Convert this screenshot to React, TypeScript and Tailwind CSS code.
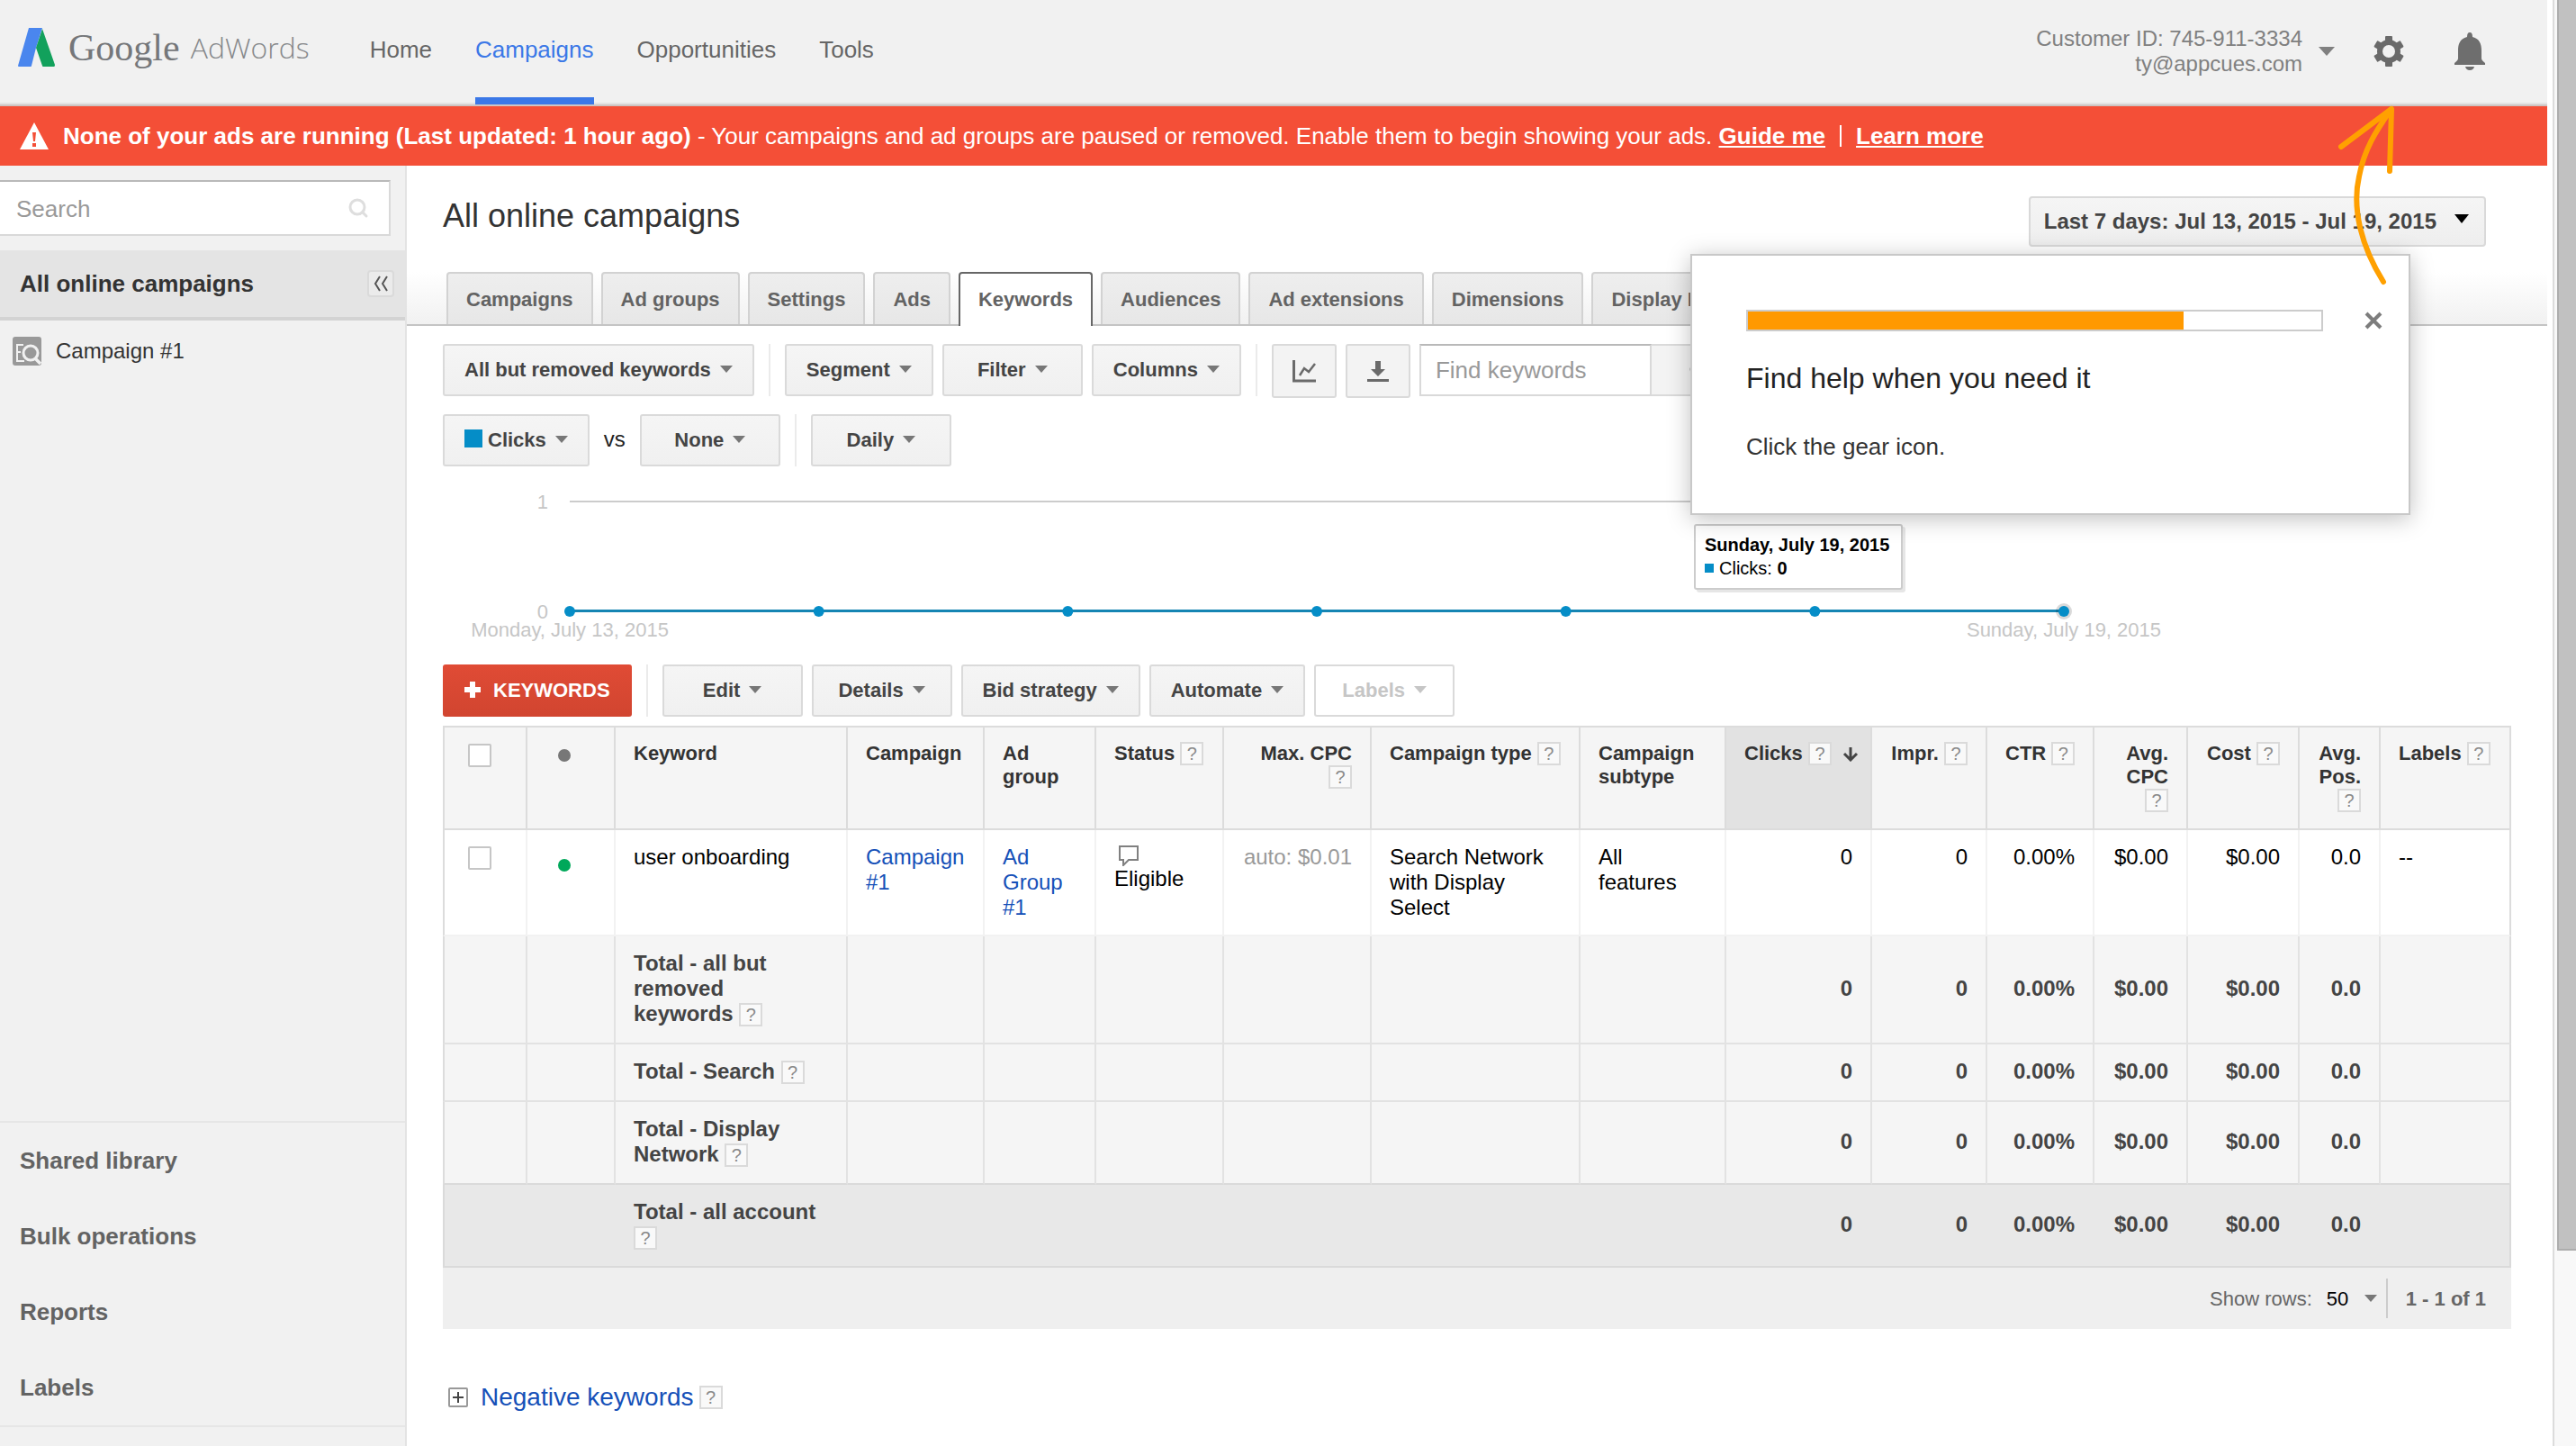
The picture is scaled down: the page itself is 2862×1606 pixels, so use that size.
import type { ReactNode } from "react";
import clsx from "clsx";
import { Search } from "lucide-react";

const NAV_LINKS = ["Home", "Campaigns", "Opportunities", "Tools"];

const TABS = [
  "Campaigns",
  "Ad groups",
  "Settings",
  "Ads",
  "Keywords",
  "Audiences",
  "Ad extensions",
  "Dimensions",
  "Display Network",
];

const SIDEBAR_LINKS = ["Shared library", "Bulk operations", "Reports", "Labels"];

const TOTALS = ["Total - all but removed keywords", "Total - Search", "Total - Display Network"];

const STATS = ["0", "0", "0.00%", "$0.00", "$0.00", "0.0"];

const POINTS = [0, 1, 2, 3, 4, 5, 6];

function Caret({ className }: { className?: string }) {
  return (
    <svg viewBox="0 0 14 8" className={clsx("h-2 w-3.5 shrink-0 fill-current", className)} aria-hidden="true">
      <path d="M0 0h14L7 8z" />
    </svg>
  );
}

function Help() {
  return (
    <button
      type="button"
      aria-label="Help"
      className="inline-block h-[26px] w-[26px] border-2 border-[#dadada] bg-[#f9f9f9] text-center align-bottom text-[20px] leading-[22px] font-normal text-[#8a8a8a]"
    >
      ?
    </button>
  );
}

function MenuButton({ children, disabled }: { children: ReactNode; disabled?: boolean }) {
  return (
    <button
      type="button"
      disabled={disabled}
      className={clsx(
        "flex h-[58px] min-w-[156px] items-center justify-center gap-2.5 rounded-[3px] border-2 border-[#dadada] px-[22px] pb-0.5 text-[22px] font-bold whitespace-nowrap",
        disabled ? "bg-white text-[#c6c6c6]" : "bg-linear-to-b from-[#f5f5f5] to-[#f0f0f0] text-[#444]"
      )}
    >
      {children}
      <Caret className={disabled ? "text-[#c6c6c6]" : "text-[#777]"} />
    </button>
  );
}

function Divider() {
  return <div className="mx-1.5 h-[58px] w-0.5 bg-[#ebebeb]" />;
}

function Header() {
  return (
    <header className="flex h-[118px] shrink-0 items-start border-b-2 border-[#cdc5c3] bg-[#f1f1f1] shadow-[inset_0_-2px_0_#e3e3e3]">
      {/* Logo */}
      <a href="#home" className="flex h-[106px] items-center pl-5" aria-label="Google AdWords">
        <svg viewBox="0 0 42 44" className="mr-3.5 h-11 w-[42px]" aria-hidden="true">
          <path d="M12 0h15l-7 22-5 20q0 1-1 1H1q-1 0-1-1z" fill="#4a86ee" />
          <path d="M27 1 41 41q0 2-1 2H28q-1 0-1-1l-7-20z" fill="#12a15c" />
        </svg>
        <span className="font-['Liberation_Serif',serif] text-[42px] text-[#75777a]">Google</span>
        <span className="ml-3 font-['Open_Sans',sans-serif] text-[32px] font-light text-[#85878a]">AdWords</span>
      </a>

      {/* Main navigation */}
      <nav className="ml-[67px] flex gap-12 text-[26px] text-[#666]">
        {NAV_LINKS.map((link) => (
          <a
            key={link}
            href={`#${link.toLowerCase()}`}
            className={clsx(
              "flex h-[116px] items-start pt-10 leading-[30px]",
              link === "Campaigns" && "border-b-8 border-[#3b78e7] text-[#3b78e7]"
            )}
          >
            {link}
          </a>
        ))}
      </nav>

      {/* Account */}
      <div className="ml-auto flex h-[114px] items-center pr-[68px]">
        <button type="button" className="flex items-center gap-[18px] text-right text-[24px] leading-7 text-[#808080]">
          <span>
            Customer ID: 745-911-3334
            <br />
            ty@appcues.com
          </span>
          <svg viewBox="0 0 18 10" className="h-2.5 w-[18px] fill-current" aria-hidden="true">
            <path d="M0 0h18L9 10z" />
          </svg>
        </button>
        <button type="button" aria-label="Settings" className="ml-[43px]">
          <svg viewBox="0 0 34 34" className="h-[34px] w-[34px] fill-[#6a6a6a]" aria-hidden="true">
            <rect x="13" y="0" width="8" height="8" rx="1" />
            <rect x="13" y="0" width="8" height="8" rx="1" transform="rotate(60 17 17)" />
            <rect x="13" y="0" width="8" height="8" rx="1" transform="rotate(120 17 17)" />
            <rect x="13" y="0" width="8" height="8" rx="1" transform="rotate(180 17 17)" />
            <rect x="13" y="0" width="8" height="8" rx="1" transform="rotate(240 17 17)" />
            <rect x="13" y="0" width="8" height="8" rx="1" transform="rotate(300 17 17)" />
            <circle cx="17" cy="17" r="10" fill="none" stroke="#6a6a6a" strokeWidth="6" />
          </svg>
        </button>
        <button type="button" aria-label="Notifications" className="ml-[55px]">
          <svg viewBox="0 0 36 42" className="h-[42px] w-9 fill-[#6e6e6e]" aria-hidden="true">
            <path d="M18 0q3 0 3 5c8 2 10 8 10 15v9q0 2 4 5v2H1v-2q4-3 4-5v-9C5 13 7 7 15 5q0-5 3-5z" />
            <path d="M13 38h10q-1 4-5 4t-5-4z" />
          </svg>
        </button>
      </div>
    </header>
  );
}

function AlertBanner() {
  return (
    <div className="flex h-[66px] shrink-0 items-center bg-[#f44f37] px-[21px] text-[26px] text-white">
      <svg viewBox="0 0 34 32" className="mr-[15px] h-8 w-[34px]" aria-hidden="true">
        <path d="M17 1 33 31H1z" fill="#fff" />
        <path d="M15 12h4l-1 10h-2zM15 24h4v4h-4z" fill="#f44f37" />
      </svg>
      <p>
        <b>None of your ads are running (Last updated: 1 hour ago)</b> - Your campaigns and ad groups are paused or
        removed. Enable them to begin showing your ads.{" "}
        <a href="#guide" className="font-bold underline">
          Guide me
        </a>
      </p>
      <div className="mx-4 h-6 w-0.5 bg-white" />
      <a href="#learn" className="font-bold underline">
        Learn more
      </a>
    </div>
  );
}

function Sidebar() {
  return (
    <aside className="flex w-[452px] shrink-0 flex-col border-r-2 border-[#e3e3e3] bg-[#f1f1f1]">
      <div className="mt-4 mr-4 mb-4 flex h-[62px] items-center border-2 border-l-0 border-[#d9d9d9] border-t-[#b9b9b9] bg-white pr-[22px]">
        <input
          type="text"
          aria-label="Search campaigns"
          placeholder="Search"
          className="min-w-0 flex-1 pt-0.5 pl-[18px] text-[26px] outline-none placeholder:text-[#999]"
        />
        <Search size={24} strokeWidth={3} className="text-[#dedede]" />
      </div>

      <div className="flex h-[78px] items-center border-b-4 border-[#d3d3d3] bg-[#e4e4e4] pr-3 pl-[22px]">
        <a href="#all" className="text-[26px] font-bold text-[#333]">
          All online campaigns
        </a>
        <button
          type="button"
          aria-label="Collapse"
          className="ml-auto flex h-[30px] w-[30px] items-center justify-center rounded-sm border-2 border-[#dadada] bg-[#ebebeb]"
        >
          <svg viewBox="0 0 18 18" className="h-[18px] w-[18px] fill-none stroke-[#555] stroke-2" aria-hidden="true">
            <path d="M8 1 3 9l5 8M16 1l-5 8 5 8" />
          </svg>
        </button>
      </div>

      <a href="#campaign-1" className="mt-4 flex items-center gap-4 pl-3.5 text-[24px] text-[#333]">
        <svg viewBox="0 0 32 32" className="h-8 w-8" aria-hidden="true">
          <rect width="32" height="32" rx="3" fill="#999" />
          <path d="M4 9h8M4 17h5M4 27h9M5 8v19" fill="none" stroke="#f1f1f1" strokeWidth="2" />
          <circle cx="20" cy="18" r="8" fill="#999" stroke="#f1f1f1" strokeWidth="3" />
          <path d="m25 24 6 6" stroke="#f1f1f1" strokeWidth="3.5" />
        </svg>
        Campaign #1
      </a>

      <nav className="mt-auto mb-[21px] border-y-2 border-[#e6e6e6]">
        {SIDEBAR_LINKS.map((link) => (
          <a
            key={link}
            href={`#${link}`}
            className="flex h-[84px] items-center pl-[22px] text-[26px] font-bold text-[#636363]"
          >
            {link}
          </a>
        ))}
      </nav>
    </aside>
  );
}

function Tabs() {
  return (
    <div className="mt-7 flex h-[60px] gap-[9px] border-b-2 border-[#c4c4c4] bg-linear-to-b from-white to-[#f1f1f1] px-11">
      {TABS.map((tab) => (
        <button
          key={tab}
          type="button"
          className={clsx(
            "rounded-t border-2 border-b-0 px-5 text-[22px] font-bold whitespace-nowrap text-[#636363]",
            tab === "Keywords"
              ? "-mb-0.5 border-[#666] bg-white pb-0.5"
              : "border-[#d2d2d2] bg-linear-to-b from-[#eee] to-[#e7e7e7]"
          )}
        >
          {tab}
        </button>
      ))}
    </div>
  );
}

function Toolbar() {
  return (
    <>
      <div className="mt-5 flex items-start gap-2.5">
        <MenuButton>All but removed keywords</MenuButton>
        <Divider />
        <MenuButton>Segment</MenuButton>
        <MenuButton>Filter</MenuButton>
        <MenuButton>Columns</MenuButton>
        <Divider />
        <button
          type="button"
          aria-label="Toggle chart"
          className="flex h-[60px] w-[72px] items-center justify-center rounded-[3px] border-2 border-[#dadada] bg-[#f3f3f3]"
        >
          <svg viewBox="0 0 26 26" className="h-[26px] w-[26px] fill-none stroke-[#6a6a6a]" aria-hidden="true">
            <path d="M1.500 1v23H26" strokeWidth="3" />
            <path d="m8 18 5-8 5 4 7-9" strokeWidth="2.500" />
          </svg>
        </button>
        <button
          type="button"
          aria-label="Download"
          className="flex h-[60px] w-[72px] items-center justify-center rounded-[3px] border-2 border-[#dadada] bg-[#f3f3f3]"
        >
          <svg viewBox="0 0 24 24" className="h-6 w-6 fill-[#6a6a6a]" aria-hidden="true">
            <path d="M9 1h6v9h5l-8 8-8-8h5zM0 21h24v3H0z" />
          </svg>
        </button>
        <div className="flex h-[58px]">
          <input
            type="text"
            aria-label="Find keywords"
            placeholder="Find keywords"
            className="w-[258px] border-2 border-[#d9d9d9] border-t-[#b9b9b9] bg-white px-4 text-[26px] outline-none placeholder:text-[#999]"
          />
          <button
            type="button"
            aria-label="Search keywords"
            className="flex w-[108px] items-center justify-center border-2 border-l-0 border-[#dadada] bg-[#f3f3f3]"
          >
            <Search size={24} strokeWidth={3} className="text-[#888]" />
          </button>
        </div>
      </div>

      <div className="mt-[18px] flex items-start gap-2.5">
        <MenuButton>
          <span className="flex items-center gap-1.5">
            <span className="mb-0.5 h-5 w-5 bg-[#058dc7]" />
            Clicks
          </span>
        </MenuButton>
        <span className="px-1.5 text-[24px] leading-[56px] text-[#222]">vs</span>
        <MenuButton>None</MenuButton>
        <Divider />
        <MenuButton>Daily</MenuButton>
      </div>
    </>
  );
}

function ClicksChart() {
  return (
    <div className="relative mr-[497px] ml-[141px] h-[220px]">
      <svg className="h-full w-full overflow-visible text-[22px]" role="img" aria-label="Clicks per day">
        <g fill="#c6c6c6">
          <text x="-24" y="47" textAnchor="end">
            1
          </text>
          <text x="-24" y="169" textAnchor="end">
            0
          </text>
          <text x="0" y="189" textAnchor="middle">
            Monday, July 13, 2015
          </text>
          <text x="100%" y="189" textAnchor="middle">
            Sunday, July 19, 2015
          </text>
        </g>
        <line x1="0" x2="100%" y1="39" y2="39" stroke="#ccc" strokeWidth="2" />
        <line x1="0" x2="100%" y1="160.500" y2="160.500" stroke="#1585b3" strokeWidth="3" />
        <circle cx="100%" cy="161" r="9" fill="#000" opacity="0.15" />
        {POINTS.map((i) => (
          <circle key={i} cx={`${(i / 6) * 100}%`} cy="161" r="6" fill="#058dc7" />
        ))}
      </svg>
      <div className="absolute top-16 right-[179px] h-[73px] w-[232px] rounded-[3px] border-2 border-[#ccc] bg-white pt-2 pl-2.5 text-[20px] leading-[26px] whitespace-nowrap text-black shadow-[3px_3px_0_#e6e6e6]">
        <b>Sunday, July 19, 2015</b>
        <div className="flex items-center gap-1.5">
          <span className="h-2.5 w-2.5 bg-[#058dc7]" />
          <span>
            Clicks: <b>0</b>
          </span>
        </div>
      </div>
    </div>
  );
}

function KeywordActions() {
  return (
    <div className="flex gap-2.5">
      <button
        type="button"
        className="flex h-[58px] items-center gap-3.5 rounded-[3px] bg-linear-to-b from-[#e04b35] to-[#d14530] px-6 pb-0.5 text-[22px] font-bold text-white"
      >
        <svg viewBox="0 0 18 18" className="h-[18px] w-[18px] fill-current" aria-hidden="true">
          <path d="M6 0h6v6h6v6h-6v6H6v-6H0V6h6z" />
        </svg>
        KEYWORDS
      </button>
      <Divider />
      <MenuButton>Edit</MenuButton>
      <MenuButton>Details</MenuButton>
      <MenuButton>Bid strategy</MenuButton>
      <MenuButton>Automate</MenuButton>
      <MenuButton disabled>Labels</MenuButton>
    </div>
  );
}

function Th({ children, className }: { children?: ReactNode; className?: string }) {
  return (
    <th
      scope="col"
      className={clsx(
        "h-[116px] border-y-2 border-r-2 border-[#dcdcdc] px-5 pt-4 align-top text-[22px] leading-[26px] font-bold text-[#333]",
        className
      )}
    >
      {children}
    </th>
  );
}

function Td({ children, className }: { children?: ReactNode; className?: string }) {
  return <td className={clsx("border-r-2 border-b-2 border-[#f2f2f2] px-5 py-4 align-top", className)}>{children}</td>;
}

const checkbox = "mt-0.5 block h-[26px] w-[26px] appearance-none rounded-[2px] border-2 border-[#c6c6c6] bg-white";

function KeywordTable() {
  return (
    <table className="mt-2.5 w-full table-fixed border-separate border-spacing-0 text-left text-[24px] leading-7 text-black">
      <colgroup>
        <col className="w-[94px]" />
        <col className="w-[98px]" />
        <col className="w-[258px]" />
        <col className="w-[152px]" />
        <col className="w-[124px]" />
        <col className="w-[142px]" />
        <col className="w-[164px]" />
        <col className="w-[232px]" />
        <col className="w-[162px]" />
        <col className="w-[162px]" />
        <col className="w-[128px]" />
        <col className="w-[119px]" />
        <col className="w-[104px]" />
        <col className="w-[124px]" />
        <col className="w-[90px]" />
        <col />
      </colgroup>
      <thead className="bg-[#f5f5f5]">
        <tr>
          <Th className="border-l-2 pl-[26px]">
            <input type="checkbox" aria-label="Select all keywords" className={checkbox} />
          </Th>
          <Th className="pl-[34px]">
            <span className="mt-2 block h-3.5 w-3.5 rounded-full bg-[#777]" />
          </Th>
          <Th>Keyword</Th>
          <Th>Campaign</Th>
          <Th>Ad group</Th>
          <Th className="whitespace-nowrap">
            Status <Help />
          </Th>
          <Th className="text-right">
            Max. CPC <Help />
          </Th>
          <Th className="whitespace-nowrap">
            Campaign type <Help />
          </Th>
          <Th>Campaign subtype</Th>
          <Th className="bg-[#e2e2e2] pr-0 whitespace-nowrap">
            Clicks <Help />
            <svg
              viewBox="0 0 18 16"
              className="mb-1 ml-3 inline-block h-4 w-[18px] fill-none stroke-[#444] stroke-3 align-bottom"
              aria-hidden="true"
            >
              <path d="M9 0v14M2 7l7 7 7-7" />
            </svg>
          </Th>
          <Th className="text-right whitespace-nowrap">
            Impr. <Help />
          </Th>
          <Th className="text-right whitespace-nowrap">
            CTR <Help />
          </Th>
          <Th className="text-right">
            Avg. CPC <Help />
          </Th>
          <Th className="text-right whitespace-nowrap">
            Cost <Help />
          </Th>
          <Th className="text-right">
            Avg. Pos. <Help />
          </Th>
          <Th className="whitespace-nowrap">
            Labels <Help />
          </Th>
        </tr>
      </thead>
      <tbody>
        <tr>
          <Td className="border-l-2 border-l-[#dcdcdc] pl-[26px]">
            <input type="checkbox" aria-label="Select user onboarding" className={checkbox} />
          </Td>
          <Td className="pl-[34px]">
            <span className="mt-4 block h-3.5 w-3.5 rounded-full bg-[#00a85a]" />
          </Td>
          <Td>user onboarding</Td>
          <Td>
            <a href="#campaign-1" className="text-[#1550b8]">
              Campaign #1
            </a>
          </Td>
          <Td>
            <a href="#ad-group-1" className="text-[#1550b8]">
              Ad Group #1
            </a>
          </Td>
          <Td>
            <svg viewBox="0 0 24 24" className="ml-1 h-6 w-6 fill-none stroke-[#808080] stroke-2" aria-hidden="true">
              <path d="M2 2h20v15H12l-6 6v-6H2z" />
            </svg>
            Eligible
          </Td>
          <Td className="text-right whitespace-nowrap text-[#999]">auto: $0.01</Td>
          <Td>Search Network with Display Select</Td>
          <Td>
            All
            <br />
            features
          </Td>
          {STATS.map((stat, i) => (
            <Td key={i} className="text-right">
              {stat}
            </Td>
          ))}
          <Td className="border-r-[#dcdcdc]">--</Td>
        </tr>
        {TOTALS.map((total, row) => (
          <tr key={total} className="bg-[#f5f5f5] font-bold text-[#444]">
            {Array.from({ length: 16 }, (_, i) => (
              <td
                key={i}
                className={clsx(
                  "border-r-2 border-b-2 border-[#e2e2e2] px-5 pt-4 pb-[18px]",
                  i === 0 && "border-l-2 border-l-[#dcdcdc]",
                  i === 15 && "border-r-[#dcdcdc]",
                  i > 8 && "text-right",
                  row === 2 && "border-b-[#dadada]"
                )}
              >
                {i === 2 && (
                  <>
                    {total} <Help />
                  </>
                )}
                {i > 8 && STATS[i - 9]}
              </td>
            ))}
          </tr>
        ))}
        <tr className="bg-[#e8e8e8] font-bold text-[#444]">
          {Array.from({ length: 16 }, (_, i) => (
            <td
              key={i}
              className={clsx(
                "border-b-2 border-[#dadada] pt-4 pr-[22px] pb-[18px] pl-5",
                i === 0 && "border-l-2",
                i === 15 && "border-r-2",
                i > 8 && "text-right"
              )}
            >
              {i === 2 && (
                <>
                  Total - all account <Help />
                </>
              )}
              {i > 8 && STATS[i - 9]}
            </td>
          ))}
        </tr>
      </tbody>
    </table>
  );
}

function TableFooter() {
  return (
    <div className="flex h-[68px] items-center justify-end bg-[#efefef] pr-7 text-[22px] text-[#666]">
      <label htmlFor="rows">Show rows:</label>
      <div className="ml-4 flex items-center">
        <select id="rows" className="w-[42px] appearance-none bg-transparent text-black outline-none">
          <option>50</option>
        </select>
        <Caret className="text-[#777]" />
      </div>
      <div className="mr-5 ml-2.5 h-11 w-0.5 bg-[#ccc]" />
      <b>1 - 1 of 1</b>
    </div>
  );
}

function HelpPopup() {
  return (
    <div className="absolute top-[282px] right-[152px] h-[290px] w-[800px] border-2 border-[#c8c8c8] bg-white px-[60px] pt-[60px] shadow-[0_4px_24px_rgba(0,0,0,0.25)]">
      <div className="-mr-12 flex items-center">
        <div className="h-6 w-[641px] shrink-0 border-2 border-[#ccc]">
          <div className="h-full w-[76%] bg-[#f90]" />
        </div>
        <button type="button" aria-label="Close" className="ml-[46px] shrink-0">
          <svg viewBox="0 0 20 20" className="block h-5 w-5 stroke-[#7d7d7d] stroke-4" aria-hidden="true">
            <path d="m2 2 16 16M18 2 2 18" />
          </svg>
        </button>
      </div>
      <h2 className="mt-8 text-[32px] leading-10 text-[#222]">Find help when you need it</h2>
      <p className="mt-10 text-[26px] leading-8 text-[#333]">Click the gear icon.</p>

      {/* Arrow that points at the gear */}
      <svg
        viewBox="0 0 66 204"
        className="absolute -top-[168px] right-[13px] h-[204px] w-[66px] fill-none stroke-[#ffa000] stroke-6"
        strokeLinecap="round"
        strokeLinejoin="round"
        aria-hidden="true"
      >
        <path d="M51 197C26 157 16 115 24 80 30 48 44 28 59 6" />
        <path d="M4 47 60 5 58 74" />
      </svg>
    </div>
  );
}

export default function App() {
  return (
    <div className="flex h-screen overflow-hidden bg-white font-['Liberation_Sans',Arial,sans-serif]">
      <div className="relative flex min-w-0 flex-1 flex-col">
        <Header />
        <AlertBanner />
        <div className="flex min-h-0 flex-1">
          <Sidebar />
          <main className="min-w-0 flex-1 overflow-hidden">
            <div className="mt-[34px] flex items-start justify-between pr-[68px] pl-10">
              <h1 className="text-[36px] leading-[44px] text-[#333]">All online campaigns</h1>
              <button
                type="button"
                className="flex h-14 items-center gap-5 rounded border-2 border-[#d9d9d9] bg-linear-to-b from-[#f5f5f5] to-[#eee] px-[15px] text-[24px] font-bold text-[#444]"
              >
                Last 7 days: Jul 13, 2015 - Jul 19, 2015
                <svg viewBox="0 0 16 10" className="mr-0.5 mb-1.5 h-2.5 w-4 fill-black" aria-hidden="true">
                  <path d="M0 0h16L8 10z" />
                </svg>
              </button>
            </div>
            <Tabs />
            <div className="px-10">
              <Toolbar />
              <ClicksChart />
              <KeywordActions />
              <KeywordTable />
              <TableFooter />
              <div className="mt-15 flex items-center pl-1.5">
                <button type="button" aria-label="Expand negative keywords">
                  <svg viewBox="0 0 22 22" className="block h-[22px] w-[22px] fill-none stroke-2" aria-hidden="true">
                    <rect x="1" y="1" width="20" height="20" rx="1" stroke="#999" />
                    <path d="M11 5v12M5 11h12" stroke="#444" />
                  </svg>
                </button>
                <a href="#negative" className="mr-1.5 ml-3.5 text-[28px] leading-8 text-[#1550b8]">
                  Negative keywords
                </a>
                <Help />
              </div>
            </div>
          </main>
        </div>
        <HelpPopup />
      </div>

      {/* Scroll bar */}
      <div className="flex w-8 shrink-0 pl-1.5">
        <div className="flex-1 border-l-2 border-[#dcdcdc] bg-[#f8f8f8] pl-[3px]">
          <div className="h-[86.500%] border-b-2 border-l-2 border-[#adadad] bg-[#c1c1c1]" />
        </div>
      </div>
    </div>
  );
}
